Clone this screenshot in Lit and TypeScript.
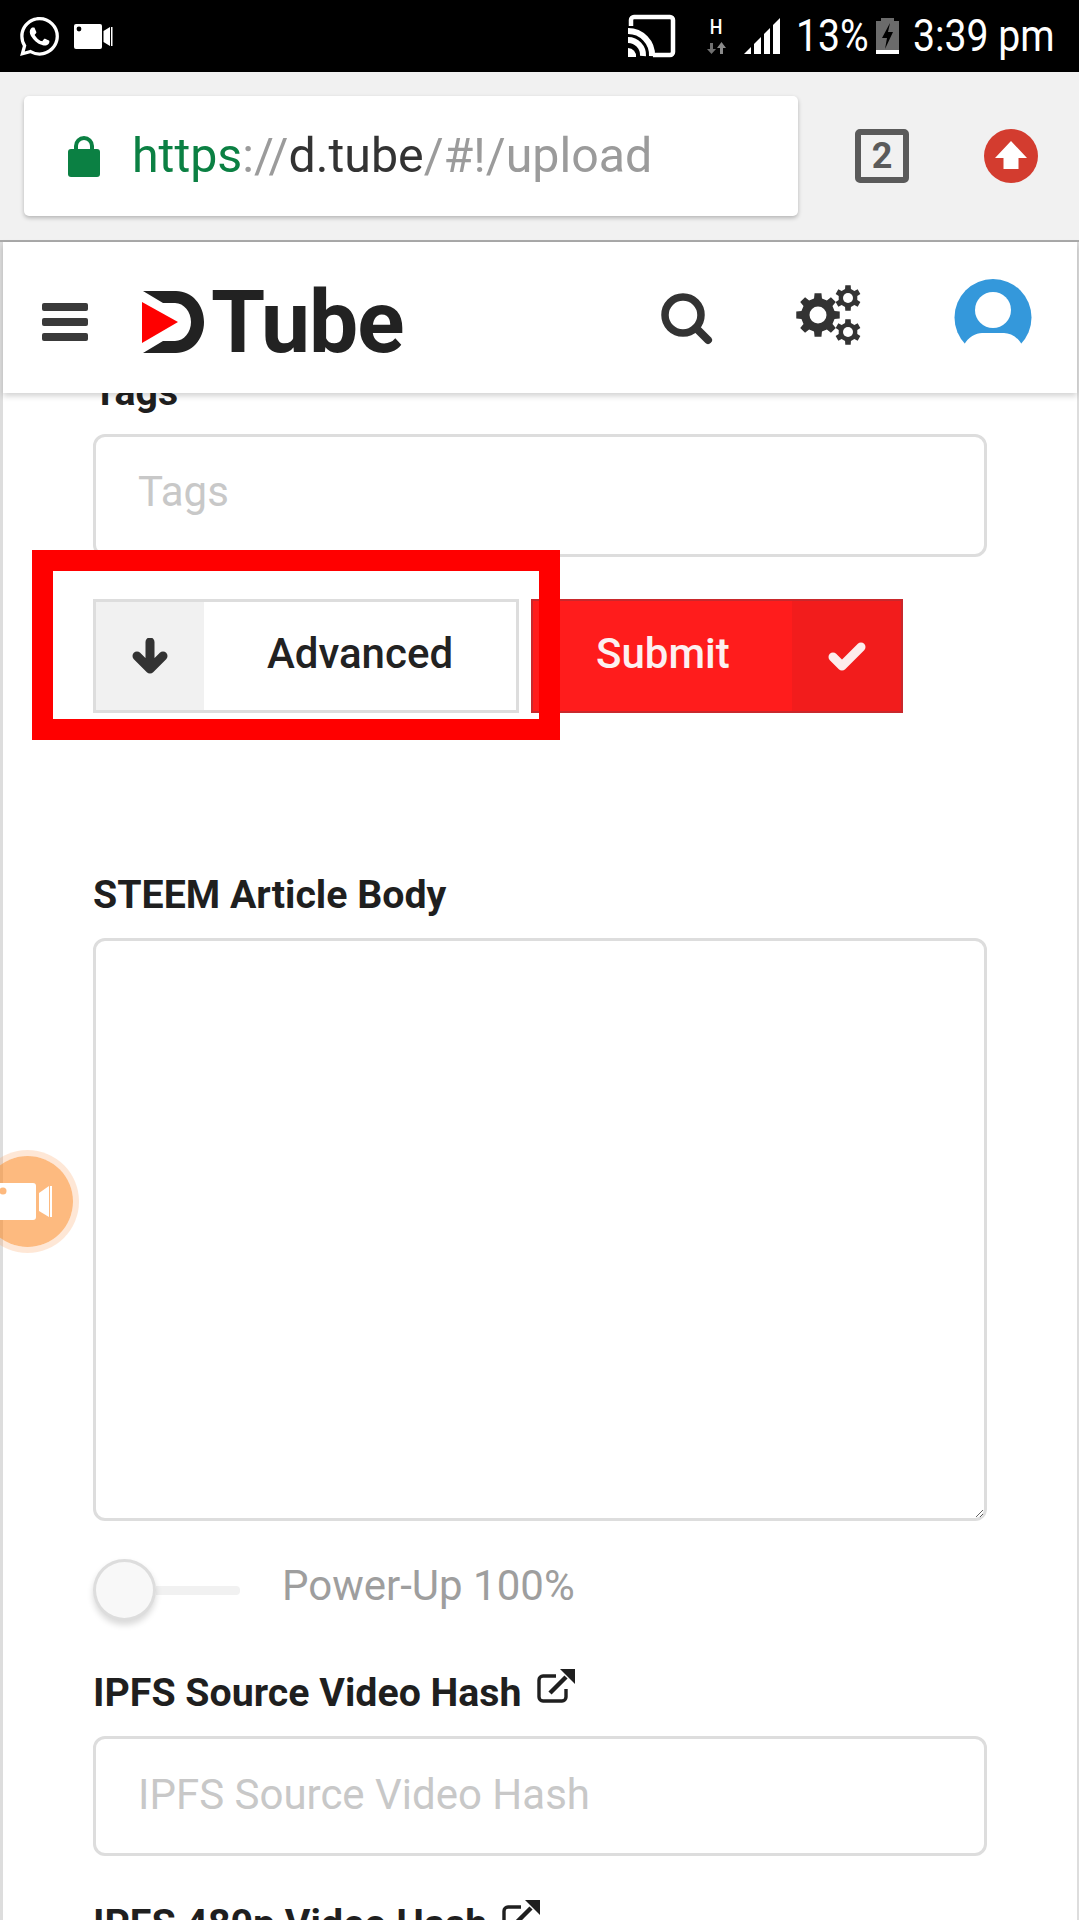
import { LitElement, html, css, svg } from "lit";
import { customElement } from "lit/decorators.js";

function gear(cx: number, cy: number, R: number, r: number, teeth: number) {
  const pts: string[] = [];
  const step = (Math.PI * 2) / teeth;
  for (let i = 0; i < teeth; i++) {
    const a = i * step - Math.PI / 2;
    const w = step * 0.2;
    const v = step * 0.3;
    const p = (ang: number, rad: number) =>
      `${(cx + Math.cos(ang) * rad).toFixed(2)},${(cy + Math.sin(ang) * rad).toFixed(2)}`;
    pts.push(p(a - v, r), p(a - w, R), p(a + w, R), p(a + v, r));
  }
  return svg`<polygon points=${pts.join(" ")} fill="#333"></polygon>`;
}

const ext = html`<svg class="ext" viewBox="0 0 39 34" aria-hidden="true">
  <path d="M20 7H7a4 4 0 0 0-4 4v17a4 4 0 0 0 4 4h19a4 4 0 0 0 4-4v-8" fill="none" stroke="#1f1f1f" stroke-width="3.4"></path>
  <path d="M14 24 30 8" fill="none" stroke="#1f1f1f" stroke-width="4.4"></path>
  <polygon points="24,0 39,0 39,15" fill="#1f1f1f"></polygon>
</svg>`;

@customElement("app-root")
export class AppRoot extends LitElement {
  static styles = css`
    :host { display: block; position: relative; width: 1079px; height: 1920px; overflow: hidden; background: #fff; font-family: Roboto, "Liberation Sans", sans-serif; color: #1f1f1f; }
    svg { display: block; flex: none; }
    .status { height: 72px; background: #000; display: flex; align-items: center; color: #fff; padding-left: 20px; box-sizing: border-box; }
    .wa { width: 39px; height: 39px; }
    .cam { width: 39px; height: 25px; margin-left: 15px; }
    .cast { width: 50px; height: 44px; margin-left: 513px; }
    .net { width: 16px; height: 38px; margin-left: 32px; position: relative; }
    .h { position: absolute; left: 0; top: 0; width: 16px; text-align: center; font-size: 21px; line-height: 20px; font-weight: 500; transform: scaleX(.85); }
    .net svg { position: absolute; left: 0; bottom: 0; }
    .signal { width: 36px; height: 36px; margin-left: 20px; }
    .pct { width: 70px; margin-left: 16px; font-size: 45px; line-height: 72px; white-space: nowrap; transform: scaleX(.87); transform-origin: left center; }
    .batt { width: 23px; height: 36px; margin-left: 10px; }
    .clock { margin-left: 14px; font-size: 45px; line-height: 72px; white-space: nowrap; transform: scaleX(.87); transform-origin: left center; }

    .chrome { height: 170px; box-sizing: border-box; background: #f1f1f1; border-bottom: 2px solid #aaa; display: flex; align-items: flex-start; padding: 24px 0 0 24px; }
    .url { width: 774px; height: 120px; background: #fff; border-radius: 5px; box-shadow: 0 2px 4px rgba(0,0,0,.25); display: flex; align-items: center; padding-left: 44px; box-sizing: border-box; }
    .lock { width: 32px; height: 42px; }
    .addr { margin-left: 32px; font-size: 48.3px; line-height: 120px; white-space: nowrap; color: #9b9b9b; font-weight: 400; }
    .addr .g { color: #0b8043; }
    .addr .d { color: #333; }
    .tab { width: 54px; height: 54px; box-sizing: border-box; border: 6px solid #5a5a5a; border-radius: 5px; margin: 33px 0 0 57px; text-align: center; color: #5a5a5a; font-size: 36px; font-weight: 700; line-height: 42px; }
    .up { width: 54px; height: 54px; margin: 33px 0 0 75px; }

    .page { border-left: 3px solid #ddd; border-right: 2px solid #ddd; height: 1678px; }
    .bar { position: relative; z-index: 2; height: 151px; background: #fff; box-shadow: 0 3px 6px rgba(0,0,0,.18); display: flex; align-items: flex-start; }
    .burger { width: 46px; margin: 61px 0 0 39px; display: flex; flex-direction: column; gap: 7px; }
    .burger i { display: block; height: 8px; border-radius: 2px; background: #3a3a3a; }
    .logo { width: 62px; height: 62px; margin: 49px 0 0 54px; }
    .brand { margin: 30px 0 0 7px; width: 198px; font-size: 87.5px; line-height: 100px; font-weight: 700; color: #222; letter-spacing: -1px; }
    .search { width: 52px; height: 52px; margin: 51px 0 0 252px; }
    .gears { width: 66px; height: 60px; margin: 43px 0 0 83px; }
    .avatar { width: 78px; height: 66px; margin: 37px 0 0 92px; }

    .content { padding-left: 90px; margin-top: -23px; }
    .label { font-size: 39.3px; font-weight: 700; line-height: 44px; display: flex; align-items: flex-start; gap: 14px; white-space: nowrap; }
    .ext { width: 39px; height: 34px; margin-top: -2px; }
    input, textarea { display: block; box-sizing: border-box; width: 894px; border: 3px solid #ddd; border-radius: 12px; background: #fff; padding: 0 41px 0 42px; font: 400 42px Roboto, sans-serif; color: #333; outline: none; }
    input::placeholder { color: #c8c8c8; opacity: 1; }
    .tags { height: 123px; margin-top: 20px; padding-bottom: 8px; }
    .actions { display: flex; gap: 12px; margin-top: 42px; }
    .btn { height: 114px; box-sizing: border-box; display: flex; align-items: stretch; font-size: 42px; font-weight: 500; line-height: 104px; }
    .adv { width: 426px; border: 3px solid #ddd; }
    .adv .ic { width: 108px; background: #f1f1f1; display: flex; align-items: center; justify-content: center; }
    .adv .tx { flex: 1; text-align: center; color: #222; }
    .sub { width: 372px; border: 2px solid #c9282c; background: #ff1c1c; color: #fff; }
    .sub .tx { width: 259px; padding-left: 63px; box-sizing: border-box; line-height: 106px; color: #fdf0f0; }
    .sub .ic { flex: 1; background: #f21c1c; display: flex; align-items: center; justify-content: center; }
    .steem { margin-top: 160px; }
    textarea { height: 583px; margin-top: 21px; resize: vertical; padding-top: 20px; }
    .slider { display: flex; align-items: center; margin-top: 38px; height: 62px; }
    .knob { width: 63px; height: 62px; box-sizing: border-box; border-radius: 50%; border: 3px solid #ddd; background: #f8f8f8; box-shadow: 0 4px 6px rgba(0,0,0,.15); position: relative; z-index: 1; }
    .track { width: 84px; height: 9px; background: #f1f1f1; border-radius: 0 4px 4px 0; }
    .pw { margin-left: 42px; font-size: 42px; color: #9e9e9e; line-height: 62px; margin-top: -8px; }
    .ipfs { margin-top: 50px; }
    .hash { height: 120px; margin-top: 21px; padding-bottom: 4px; }
    .next { margin-top: 46px; }

    .mark { position: absolute; left: 32px; top: 550px; width: 528px; height: 190px; box-sizing: border-box; border: 21px solid #f00; z-index: 3; }
    .bubble { position: absolute; left: -24px; top: 1150px; width: 103px; height: 103px; box-sizing: border-box; border-radius: 50%; background: rgba(251,140,42,.6); border: 6px solid rgba(251,160,90,.25); background-clip: padding-box; z-index: 3; display: flex; align-items: center; padding-left: 14px; }
    .bubble svg { width: 60px; height: 38px; }
  `;

  render() {
    return html`
      <div class="status">
        <svg class="wa" viewBox="0 0 24 24"><path fill="#fff" d="M17.472 14.382c-.297-.149-1.758-.867-2.03-.967-.273-.099-.471-.148-.67.15-.197.297-.767.966-.94 1.164-.173.199-.347.223-.644.075-.297-.15-1.255-.463-2.39-1.475-.883-.788-1.48-1.761-1.653-2.059-.173-.297-.018-.458.13-.606.134-.133.298-.347.446-.52.149-.174.198-.298.298-.497.099-.198.05-.371-.025-.52-.075-.149-.669-1.612-.916-2.207-.242-.579-.487-.5-.669-.51-.173-.008-.371-.01-.57-.01-.198 0-.52.074-.792.372-.272.297-1.04 1.016-1.04 2.479 0 1.462 1.065 2.875 1.213 3.074.149.198 2.096 3.2 5.077 4.487.709.306 1.262.489 1.694.625.712.227 1.36.195 1.871.118.571-.085 1.758-.719 2.006-1.413.248-.694.248-1.289.173-1.413-.074-.124-.272-.198-.57-.347m-5.421 7.403h-.004a9.87 9.87 0 01-5.031-1.378l-.361-.214-3.741.982.998-3.648-.235-.374a9.86 9.86 0 01-1.51-5.26c.001-5.45 4.436-9.884 9.888-9.884 2.64 0 5.122 1.03 6.988 2.898a9.825 9.825 0 012.893 6.994c-.003 5.45-4.437 9.884-9.885 9.884m8.413-18.297A11.815 11.815 0 0012.05 0C5.495 0 .16 5.335.157 11.892c0 2.096.547 4.142 1.588 5.945L.057 24l6.305-1.654a11.882 11.882 0 005.683 1.448h.005c6.554 0 11.89-5.335 11.893-11.893a11.821 11.821 0 00-3.48-8.413z"></path></svg>
        <svg class="cam" viewBox="0 0 39 25">
          <rect x="0" y="0" width="28" height="25" rx="2" fill="#fff"></rect>
          <circle cx="5" cy="5" r="2.4" fill="#000"></circle>
          <polygon points="29.5,7 36,3 36,22 29.5,18" fill="#fff"></polygon>
          <rect x="37" y="3" width="1.5" height="19" fill="#fff"></rect>
        </svg>
        <svg class="cast" viewBox="0 0 50 44">
          <path d="M5 12V6a3 3 0 0 1 3-3h36a3 3 0 0 1 3 3v32a3 3 0 0 1-3 3H27" fill="none" stroke="#fff" stroke-width="4.5"></path>
          <path d="M2 17a24 24 0 0 1 24 25" fill="none" stroke="#fff" stroke-width="6"></path>
          <path d="M2 26a15 15 0 0 1 15 16" fill="none" stroke="#fff" stroke-width="6"></path>
          <path d="M2 34a8 8 0 0 1 8 9H2z" fill="#fff"></path>
        </svg>
        <div class="net"><span class="h">H</span>
          <svg width="20" height="14" viewBox="0 0 20 14" style="left:-1px"><path d="M3 2h3v6h3l-4.500 5L0 8h3z" fill="#6f6f6f"></path><path d="M13 13h3V7h3l-4.500-6L10 7h3z" fill="#8a8a8a"></path></svg>
        </div>
        <svg class="signal" viewBox="0 0 36 36"><g fill="#fff">
          <polygon points="0,36 7,29 7,36"></polygon>
          <polygon points="10,26 17,19 17,36 10,36"></polygon>
          <polygon points="20,16 26,10 26,36 20,36"></polygon>
          <polygon points="29,7 36,0 36,36 29,36"></polygon>
        </g></svg>
        <div class="pct">13%</div>
        <svg class="batt" viewBox="0 0 23 36">
          <rect x="5" y="0" width="13" height="3" fill="#6b6b6b"></rect>
          <rect x="0" y="3" width="23" height="29" fill="#6b6b6b"></rect>
          <rect x="0" y="32" width="23" height="4" fill="#fff"></rect>
          <polygon points="14,5 6,20 11,20 9,31 17,14 12,14" fill="#000"></polygon>
        </svg>
        <div class="clock">3:39 pm</div>
      </div>

      <div class="chrome">
        <div class="url">
          <svg class="lock" viewBox="0 0 32 42">
            <path d="M8 18V11a8 8 0 0 1 16 0v7" fill="none" stroke="#0b8043" stroke-width="4"></path>
            <rect x="0" y="14" width="32" height="28" rx="3" fill="#0b8043"></rect>
          </svg>
          <div class="addr"><span class="g">https</span>://<span class="d">d.tube</span>/#!/upload</div>
        </div>
        <div class="tab">2</div>
        <svg class="up" viewBox="0 0 54 54">
          <circle cx="27" cy="27" r="27" fill="#d33c2f"></circle>
          <polygon points="27,12 43,29 34.500,29 34.500,40 19.500,40 19.500,29 11,29" fill="#fff"></polygon>
        </svg>
      </div>

      <div class="page">
        <div class="bar">
          <div class="burger"><i></i><i></i><i></i></div>
          <svg class="logo" viewBox="0 0 62 62">
            <path d="M1 0H34C50 0 62 14 62 31S50 62 34 62H1L21 50H33C42 50 49 41 49 31S42 12 33 12H21Z" fill="#222"></path>
            <polygon points="0,11 36,31 0,52" fill="#f00"></polygon>
          </svg>
          <div class="brand">Tube</div>
          <svg class="search" viewBox="0 0 52 52">
            <circle cx="22" cy="22" r="18" fill="none" stroke="#333" stroke-width="7.500"></circle>
            <path d="M35 35 47 47" stroke="#333" stroke-width="8" stroke-linecap="round"></path>
          </svg>
          <svg class="gears" viewBox="0 0 66 60">
            ${gear(22, 30, 22, 17, 8)}
            <circle cx="22" cy="30" r="8.500" fill="#fff"></circle>
            ${gear(52, 13, 13, 9.500, 6)}
            <circle cx="52" cy="13" r="5" fill="#fff"></circle>
            ${gear(52, 47, 13, 9.500, 6)}
            <circle cx="52" cy="47" r="5" fill="#fff"></circle>
          </svg>
          <svg class="avatar" viewBox="0 0 78 66">
            <circle cx="39" cy="38.500" r="38.500" fill="#3498db"></circle>
            <circle cx="39" cy="31" r="18" fill="#fff"></circle>
            <path d="M0 66 H78 L68 66 C64 58 56 54 50 54 H28 C22 54 14 58 10 66 Z" fill="#fff"></path>
            <rect x="0" y="65" width="78" height="1" fill="#fff"></rect>
          </svg>
        </div>

        <div class="content">
          <div class="label">Tags</div>
          <input class="tags" placeholder="Tags" />
          <div class="actions">
            <div class="btn adv">
              <div class="ic"><svg width="38" height="36" viewBox="0 0 38 36"><path d="M19 4V30M6 18 19 31 32 18" fill="none" stroke="#333" stroke-width="9" stroke-linecap="round" stroke-linejoin="round"></path></svg></div>
              <div class="tx">Advanced</div>
            </div>
            <div class="btn sub">
              <div class="tx">Submit</div>
              <div class="ic"><svg width="38" height="30" viewBox="0 0 38 30"><path d="M5 16 14 25 33 6" fill="none" stroke="#fdecec" stroke-width="9" stroke-linecap="round" stroke-linejoin="round"></path></svg></div>
            </div>
          </div>
          <div class="label steem">STEEM Article Body</div>
          <textarea></textarea>
          <div class="slider"><div class="knob"></div><div class="track"></div><div class="pw">Power-Up 100%</div></div>
          <div class="label ipfs">IPFS Source Video Hash ${ext}</div>
          <input class="hash" placeholder="IPFS Source Video Hash" />
          <div class="label next">IPFS 480p Video Hash ${ext}</div>
        </div>
      </div>

      <div class="mark"></div>
      <div class="bubble">
        <svg viewBox="0 0 60 38">
          <rect x="-10" y="0" width="50" height="37" rx="3" fill="#fff"></rect>
          <circle cx="7" cy="8" r="3.500" fill="#fdb97e"></circle>
          <polygon points="43,10 53,3 53,34 43,28" fill="#fff"></polygon>
          <rect x="54" y="3" width="2" height="31" fill="#fff"></rect>
        </svg>
      </div>
    `;
  }
}
